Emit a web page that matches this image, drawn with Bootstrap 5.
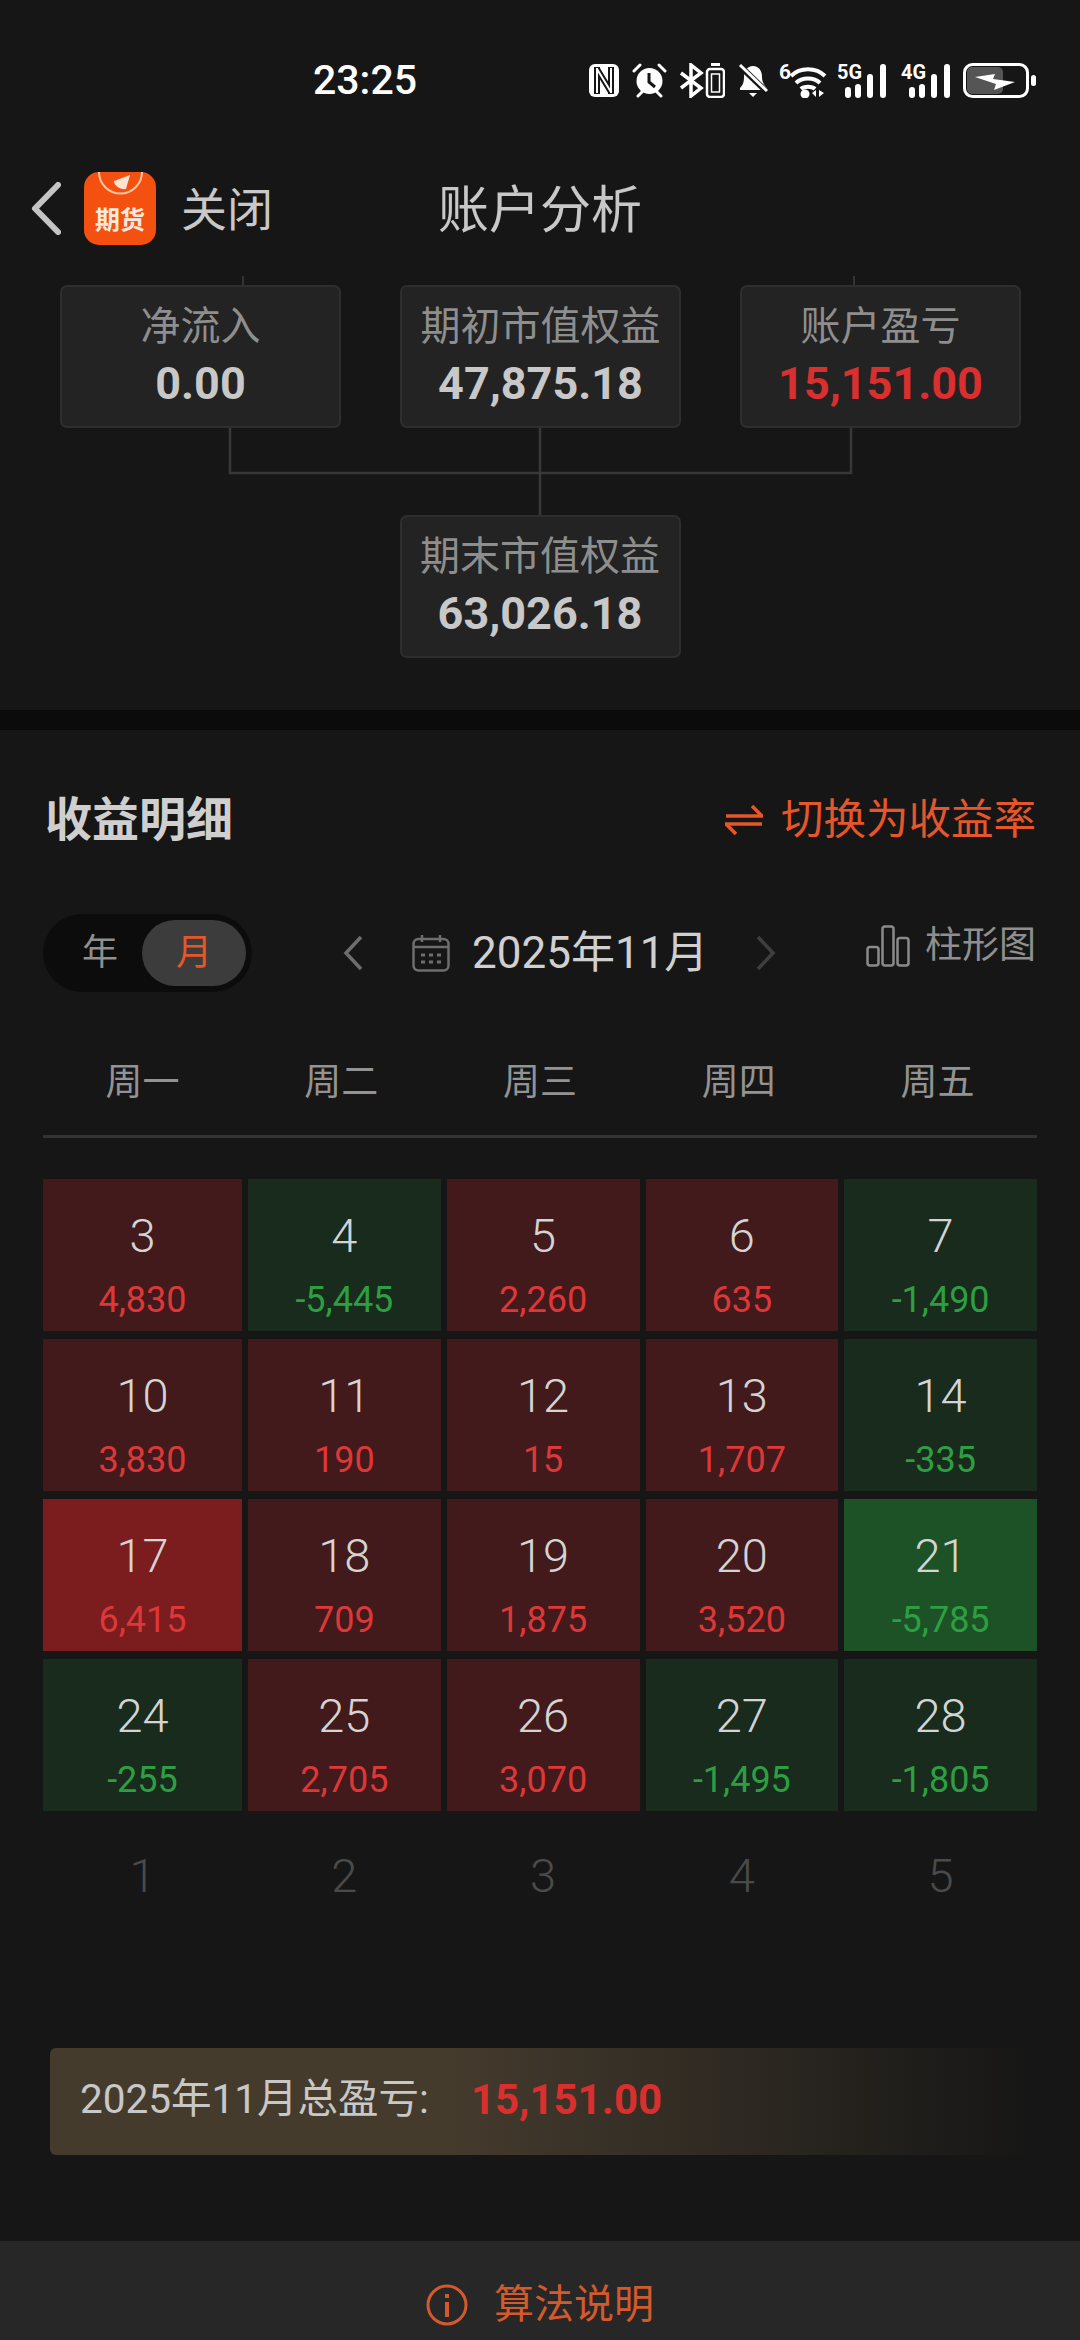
<!DOCTYPE html>
<html lang="zh-CN">
<head>
    <meta charset="UTF-8">
    <meta name="viewport" content="width=device-width, initial-scale=1.0">
    <title>账户分析</title>
    <link href="https://cdn.jsdelivr.net/npm/bootstrap@5.3.0/dist/css/bootstrap.min.css" rel="stylesheet">
    <style>
        html, body {
            height: 2340px;
            overflow: hidden;
        }
        body {
            background-color: #161616;
            color: #c8c8c8;
            font-family: Roboto, "Noto Sans CJK SC", sans-serif;
        }
        svg { display: block; flex: none; }

        /* status bar */
        .status-row { height: 130px; padding: 63px 44px 0 313px; }
        .status-time { width: 279px; color: #fff; font-size: 41px; line-height: 35px; font-weight: 500; }
        .status-icons { height: 35px; }
        .si-alarm { margin-left: 13px; }
        .si-bt { margin-left: 12px; }
        .si-bell { margin-left: 14px; }
        .si-wifi { margin-left: 11px; margin-top: -8px; }
        .si-5g { margin-left: 10px; margin-top: -8px; }
        .si-4g { margin-left: 14px; margin-top: -8px; }
        .si-batt { margin-left: 12px; }
        .si-label { font-family: Roboto, sans-serif; font-size: 21px; font-weight: 700; fill: #fff; }

        /* title bar */
        .title-row { height: 146px; display: grid; grid-template-columns: 1fr auto 1fr; }
        .title-left { padding: 42px 0 0 31px; height: 116px; }
        .back-arrow { margin-top: 10px; }
        .app-logo { margin-left: 23px; }
        .close-text { font-size: 46px; line-height: 76px; margin-left: 25px; }
        .page-title { font-size: 51px; line-height: 60px; padding-top: 51px; }

        /* flow diagram */
        .stat-row { padding-left: 60px; gap: 59px; }
        .stat-box {
            width: 281px;
            height: 143px;
            background: #232323;
            border: 2px solid #2e2e2e;
            border-radius: 7px;
            text-align: center;
        }
        .stat-label { font-size: 40px; line-height: 50px; padding-top: 15px; color: #8e8e8e; }
        .stat-num { font-size: 45px; line-height: 56px; margin-top: 4px; font-weight: 700; color: #c8c8c8; }
        .text-loss { color: #d92f2f; }
        .band { height: 20px; margin-top: 52px; background: #0b0b0b; }

        /* detail header */
        .detail-head { height: 100px; margin-top: 40px; padding: 0 44px 0 45px; }
        .detail-title { font-size: 47px; line-height: 102px; font-weight: 700; color: #cfcfcf; }
        .switch-link { font-size: 42.5px; gap: 18px; color: #e5562a; }

        /* controls */
        .ctl-row { height: 78px; margin-top: 44px; padding: 0 44px 0 43px; }
        .period-pill { width: 209px; height: 78px; padding: 6px 5px 6px 0; border-radius: 39px; background: #0c0c0c; }
        .period-off { width: 99px; padding-left: 15px; text-align: center; font-size: 36px; color: #8f8f8f; }
        .period-on { width: 104px; height: 66px; border-radius: 33px; background: #3c3c3c; text-align: center; font-size: 36px; line-height: 66px; color: #e5562a; }
        .prev-arrow { margin-left: 91px; }
        .cal-icon { margin-left: 49px; }
        .month-text { margin-left: 22px; font-size: 44px; color: #d0d0d0; white-space: nowrap; }
        .next-arrow { margin-left: 48px; }
        .chart-link { gap: 15px; margin-bottom: 14px; }
        .chart-text { font-size: 37px; line-height: 40px; color: #8f8f8f; }

        /* calendar */
        .week-row {
            display: grid;
            grid-template-columns: repeat(5, 1fr);
            margin: 61px 43px 0;
            padding-bottom: 22px;
            border-bottom: 3px solid #333;
            text-align: center;
            font-size: 37px;
            line-height: 60px;
            color: #939393;
        }
        .cal-grid {
            display: grid;
            grid-template-columns: 199px repeat(4, 1fr);
            grid-auto-rows: 152px;
            gap: 8px 6px;
            margin: 41px 43px 0;
            text-align: center;
        }
        .day-num { font-size: 47px; line-height: 60px; padding-top: 27px; font-weight: 300; color: #d4d4d4; }
        .day-val { font-size: 36px; line-height: 40px; margin-top: 14px; }
        .cell-up { background: #421a1b; }
        .cell-down { background: #182b1c; }
        .cell-up-hi { background: #7b1c1e; }
        .cell-down-hi { background: #1c5226; }
        .cell-up .day-val, .cell-up-hi .day-val { color: #dd3738; }
        .cell-down .day-val, .cell-down-hi .day-val { color: #2d9f42; }
        .cell-next .day-num { color: #4a4a4a; }

        /* total bar */
        .total-bar {
            height: 107px;
            margin: 77px 45px 0 50px;
            padding: 0 0 4px 30px;
            border-radius: 6px;
            background: linear-gradient(90deg, #453b2d 0%, #453b2d 40%, #161616 100%);
            font-size: 40.5px;
        }
        .total-num { margin-left: 42px; font-size: 42px; font-weight: 700; color: #d92f2f; }

        /* footer */
        .foot-bar { height: 99px; margin-top: 86px; padding-top: 28px; gap: 26px; background: #272727; font-size: 40px; color: #d35a2c; }
    </style>
</head>
<body>
    <!-- status bar -->
    <div class="status-row d-flex">
        <div class="status-time">23:25</div>
        <div class="status-icons d-flex align-items-center">
            <!-- nfc -->
            <svg width="30" height="33" viewBox="0 0 30 33"><rect width="30" height="33" rx="6" fill="#fff"/><path d="M8 3v27M8 5l14 23M22 3v27" fill="none" stroke="#161616" stroke-width="6"/><path d="M8 4v25M8 5l14 23M22 4v25" fill="none" stroke="#fff" stroke-width="2"/></svg>
            <!-- alarm -->
            <svg class="si-alarm" width="35" height="35" viewBox="0 0 35 35"><circle cx="17.5" cy="18" r="13" fill="#fff"/><path d="M17 10v9l6 5" fill="none" stroke="#161616" stroke-width="3"/><path d="M2 8l6-6M33 8l-6-6M6 33l4-4M29 33l-4-4" stroke="#fff" stroke-width="3" stroke-linecap="round"/></svg>
            <!-- bluetooth + vibrate battery -->
            <svg class="si-bt" width="46" height="35" viewBox="0 0 46 35"><path d="M2 10l20 15-10 8V2l10 8L2 25" fill="none" stroke="#fff" stroke-width="3.5"/><rect x="28" y="6" width="17" height="28" rx="3" fill="none" stroke="#fff" stroke-width="2.5"/><rect x="32.5" y="11" width="8" height="18" fill="#161616" stroke="#fff" stroke-width="1.5"/><rect x="32" y="0" width="9" height="3" fill="#fff"/></svg>
            <!-- muted bell -->
            <svg class="si-bell" width="29" height="35" viewBox="0 0 29 35"><path d="M14 3c6 0 9 5 9 11 0 5 2 8 5 11v2H1v-2c3-3 4-6 4-11 0-6 3-11 9-11z" fill="#fff"/><path d="M10 30h8l-4 4z" fill="#fff"/><path d="M1 3l27 26" stroke="#161616" stroke-width="6"/><path d="M1 2l27 26" stroke="#fff" stroke-width="3"/></svg>
            <!-- wifi -->
            <svg class="si-wifi" width="48" height="43" viewBox="0 -8 48 43"><text class="si-label" x="0" y="16">6</text><path d="M12 13c9-9 25-9 34 0M17 20c6-6 18-6 24 0M22 26c3-3 11-3 14 0" fill="none" stroke="#fff" stroke-width="4"/><circle cx="26" cy="31" r="4.5" fill="#fff"/><path d="M33 30l4-3v7zM40 27l5 3-5 4z" fill="#fff"/></svg>
            <!-- 5g signal -->
            <svg class="si-5g" width="50" height="43" viewBox="0 -8 50 43"><text class="si-label" x="0" y="16" textLength="25" lengthAdjust="spacingAndGlyphs">5G</text><rect x="8" y="24" width="6" height="11" rx="3" fill="#fff"/><rect x="18" y="21" width="6" height="14" rx="3" fill="#fff"/><rect x="30" y="11" width="6" height="24" rx="3" fill="#fff"/><rect x="43" y="1" width="6" height="34" rx="3" fill="#fff"/></svg>
            <!-- 4g signal -->
            <svg class="si-4g" width="50" height="43" viewBox="0 -8 50 43"><text class="si-label" x="0" y="16" textLength="25" lengthAdjust="spacingAndGlyphs">4G</text><rect x="8" y="24" width="6" height="11" rx="3" fill="#fff"/><rect x="18" y="21" width="6" height="14" rx="3" fill="#fff"/><rect x="30" y="11" width="6" height="24" rx="3" fill="#fff"/><rect x="43" y="1" width="6" height="34" rx="3" fill="#fff"/></svg>
            <!-- battery -->
            <svg class="si-batt" width="73" height="35" viewBox="0 0 73 35"><rect x="4" y="4" width="36" height="27" rx="5" fill="#555"/><rect x="1.5" y="1.5" width="63" height="32" rx="8" fill="none" stroke="#fff" stroke-width="3"/><path d="M12 14l20-3-2 5 22 3-21 8 2-6-21-7z" fill="#fff"/><rect x="68" y="12" width="5" height="11" rx="2.5" fill="#fff"/></svg>
        </div>
    </div>

    <!-- title bar -->
    <div class="title-row">
        <div class="title-left d-flex">
            <svg class="back-arrow" width="30" height="53" viewBox="0 0 30 53"><path d="M27 3L4 26.5 27 50" fill="none" stroke="#c4c4c4" stroke-width="6" stroke-linecap="round" stroke-linejoin="round"/></svg>
            <svg class="app-logo" width="72" height="73" viewBox="0 0 72 73">
                <rect width="72" height="73" rx="15" fill="#f4500f"/>
                <path d="M15 0a21 21 0 0 0 43 0" fill="none" stroke="#fbc9a8" stroke-width="2"/>
                <path d="M30 9l16-6-4 14c-5 1-12-3-12-8z" fill="#fde3d2"/>
                <text x="36" y="57" text-anchor="middle" font-family="'Noto Sans CJK SC', sans-serif" font-size="25" font-weight="700" fill="#fde9dc">期货</text>
            </svg>
            <div class="close-text">关闭</div>
        </div>
        <div class="page-title">账户分析</div>
        <div></div>
    </div>

    <!-- flow diagram -->
    <svg width="1080" height="9" viewBox="0 0 1080 9"><path d="M243 0v9M854 0v9" stroke="#333" stroke-width="2"/></svg>
    <div class="stat-row d-flex">
        <div class="stat-box">
            <div class="stat-label">净流入</div>
            <div class="stat-num">0.00</div>
        </div>
        <div class="stat-box">
            <div class="stat-label">期初市值权益</div>
            <div class="stat-num">47,875.18</div>
        </div>
        <div class="stat-box">
            <div class="stat-label">账户盈亏</div>
            <div class="stat-num text-loss">15,151.00</div>
        </div>
    </div>
    <svg width="1080" height="87" viewBox="0 0 1080 87"><path d="M230 0v45H851V0M540 0v87" fill="none" stroke="#383838" stroke-width="2.5"/></svg>
    <div class="d-flex justify-content-center">
        <div class="stat-box">
            <div class="stat-label">期末市值权益</div>
            <div class="stat-num">63,026.18</div>
        </div>
    </div>
    <div class="band"></div>

    <!-- detail header -->
    <div class="detail-head d-flex justify-content-between align-items-center">
        <div class="detail-title">收益明细</div>
        <div class="switch-link d-flex align-items-center">
            <svg width="38" height="32" viewBox="0 0 38 32"><path d="M1 12h36L27 2M37 20H1l10 10" fill="none" stroke="#e5562a" stroke-width="3.5"/></svg>
            <span>切换为收益率</span>
        </div>
    </div>

    <!-- controls -->
    <div class="ctl-row d-flex align-items-center">
        <div class="period-pill d-flex align-items-center">
            <div class="period-off">年</div>
            <div class="period-on">月</div>
        </div>
        <svg class="prev-arrow" width="20" height="36" viewBox="0 0 20 36"><path d="M18 2L3 18l15 16" fill="none" stroke="#6e6e6e" stroke-width="3.5"/></svg>
        <svg class="cal-icon" width="38" height="38" viewBox="0 0 38 38"><rect x="1.5" y="5" width="35" height="31.5" rx="5" fill="none" stroke="#6e6e6e" stroke-width="2.5"/><path d="M2 13h34M10 1v7M28 1v7" fill="none" stroke="#6e6e6e" stroke-width="2.5"/><path d="M9 21h4M17 21h4M25 21h4M9 28h4M17 28h4M25 28h4" stroke="#6e6e6e" stroke-width="3"/></svg>
        <div class="month-text">2025年11月</div>
        <svg class="next-arrow" width="20" height="36" viewBox="0 0 20 36"><path d="M2 2l15 16L2 34" fill="none" stroke="#3f3f3f" stroke-width="3.5"/></svg>
        <div class="chart-link d-flex align-items-center ms-auto">
            <svg width="44" height="42" viewBox="0 0 44 42"><rect x="1.5" y="22" width="11" height="18.5" rx="2.5" fill="none" stroke="#8a8a8a" stroke-width="2.5"/><rect x="16.5" y="1.5" width="11" height="39" rx="2.5" fill="none" stroke="#8a8a8a" stroke-width="2.5"/><rect x="31.5" y="13" width="11" height="27.5" rx="2.5" fill="none" stroke="#8a8a8a" stroke-width="2.5"/></svg>
            <div class="chart-text">柱形图</div>
        </div>
    </div>

    <!-- calendar -->
    <div class="week-row">
        <div>周一</div><div>周二</div><div>周三</div><div>周四</div><div>周五</div>
    </div>
    <div class="cal-grid">
        <div class="cell-up"><div class="day-num">3</div><div class="day-val">4,830</div></div>
        <div class="cell-down"><div class="day-num">4</div><div class="day-val">-5,445</div></div>
        <div class="cell-up"><div class="day-num">5</div><div class="day-val">2,260</div></div>
        <div class="cell-up"><div class="day-num">6</div><div class="day-val">635</div></div>
        <div class="cell-down"><div class="day-num">7</div><div class="day-val">-1,490</div></div>

        <div class="cell-up"><div class="day-num">10</div><div class="day-val">3,830</div></div>
        <div class="cell-up"><div class="day-num">11</div><div class="day-val">190</div></div>
        <div class="cell-up"><div class="day-num">12</div><div class="day-val">15</div></div>
        <div class="cell-up"><div class="day-num">13</div><div class="day-val">1,707</div></div>
        <div class="cell-down"><div class="day-num">14</div><div class="day-val">-335</div></div>

        <div class="cell-up-hi"><div class="day-num">17</div><div class="day-val">6,415</div></div>
        <div class="cell-up"><div class="day-num">18</div><div class="day-val">709</div></div>
        <div class="cell-up"><div class="day-num">19</div><div class="day-val">1,875</div></div>
        <div class="cell-up"><div class="day-num">20</div><div class="day-val">3,520</div></div>
        <div class="cell-down-hi"><div class="day-num">21</div><div class="day-val">-5,785</div></div>

        <div class="cell-down"><div class="day-num">24</div><div class="day-val">-255</div></div>
        <div class="cell-up"><div class="day-num">25</div><div class="day-val">2,705</div></div>
        <div class="cell-up"><div class="day-num">26</div><div class="day-val">3,070</div></div>
        <div class="cell-down"><div class="day-num">27</div><div class="day-val">-1,495</div></div>
        <div class="cell-down"><div class="day-num">28</div><div class="day-val">-1,805</div></div>

        <div class="cell-next"><div class="day-num">1</div></div>
        <div class="cell-next"><div class="day-num">2</div></div>
        <div class="cell-next"><div class="day-num">3</div></div>
        <div class="cell-next"><div class="day-num">4</div></div>
        <div class="cell-next"><div class="day-num">5</div></div>
    </div>

    <!-- month total -->
    <div class="total-bar d-flex align-items-center">
        <span>2025年11月总盈亏:</span>
        <span class="total-num">15,151.00</span>
    </div>

    <!-- footer -->
    <div class="foot-bar d-flex align-items-center justify-content-center">
        <svg width="42" height="42" viewBox="0 0 42 42"><circle cx="21" cy="21" r="19" fill="none" stroke="#d35a2c" stroke-width="3"/><rect x="19" y="18" width="4" height="15" fill="#d35a2c"/><rect x="19" y="10" width="4" height="4" fill="#d35a2c"/></svg>
        <span>算法说明</span>
    </div>

    <script src="https://cdn.jsdelivr.net/npm/bootstrap@5.3.0/dist/js/bootstrap.bundle.min.js"></script>
</body>
</html>
